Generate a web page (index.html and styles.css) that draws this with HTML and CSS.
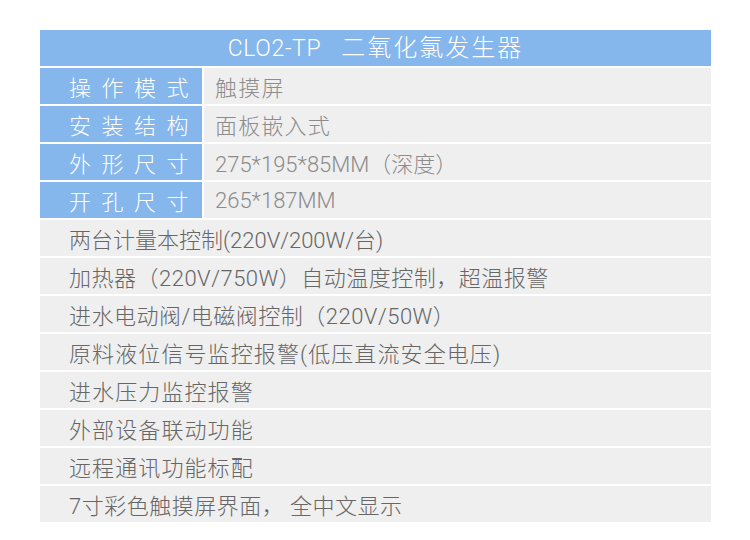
FILE: index.html
```html
<!DOCTYPE html>
<html lang="zh-CN">
<head>
<meta charset="utf-8">
<title>CLO2-TP 二氧化氯发生器</title>
<link rel="stylesheet" href="styles.css">
</head>
<body>
<div class="table">
  <div class="title"><span class="model">CLO2-TP</span><span class="name">二氧化氯发生器</span></div>
  <div class="spec"><div class="label">操作模式</div><div class="value">触摸屏</div></div>
  <div class="spec"><div class="label">安装结构</div><div class="value">面板嵌入式</div></div>
  <div class="spec"><div class="label">外形尺寸</div><div class="value latin">275*195*85MM（深度）</div></div>
  <div class="spec"><div class="label">开孔尺寸</div><div class="value latin">265*187MM</div></div>
  <div class="feature tight">两台计量本控制(220V/200W/台)</div>
  <div class="feature mid">加热器（220V/750W）自动温度控制，超温报警</div>
  <div class="feature mid">进水电动阀/电磁阀控制（220V/50W）</div>
  <div class="feature">原料液位信号监控报警(低压直流安全电压)</div>
  <div class="feature">进水压力监控报警</div>
  <div class="feature">外部设备联动功能</div>
  <div class="feature">远程通讯功能标配</div>
  <div class="feature mid">7寸彩色触摸屏界面， 全中文显示</div>
</div>
</body>
</html>
```
FILE: styles.css
```css
html, body {
  margin: 0;
  padding: 0;
  background: #ffffff;
}
body {
  font-family: Roboto, "Liberation Sans", "Noto Sans CJK SC", sans-serif;
  font-size: 22px;
  font-weight: 300;
}
.table {
  width: 671px;
  margin: 30px 0 0 40px;
  display: grid;
  grid-auto-rows: 36px;
  row-gap: 2px;
}
.title {
  background: #85b6ec;
  color: #ffffff;
  text-align: center;
  line-height: 36px;
  white-space: nowrap;
}
.title .model {
  font-size: 23px;
  letter-spacing: 0.6px;
  margin-right: 20px;
}
.title .name {
  font-size: 24px;
  letter-spacing: 2px;
}
.spec {
  display: grid;
  grid-template-columns: 162px 1fr;
  column-gap: 2px;
}
.label {
  background: #85b6ec;
  color: #ffffff;
  display: flex;
  align-items: center;
  padding-left: 29px;
  letter-spacing: 10.5px;
}
.value {
  background: #efefef;
  color: #8c8c8c;
  display: flex;
  align-items: center;
  padding-left: 11px;
  letter-spacing: 1.2px;
}
.value.latin {
  letter-spacing: 0;
}
.feature {
  background: #efefef;
  color: #666666;
  display: flex;
  align-items: center;
  padding-left: 29px;
  letter-spacing: 1.1px;
}
.feature.mid {
  letter-spacing: 0.5px;
}
.feature.tight {
  letter-spacing: 0;
}
```
